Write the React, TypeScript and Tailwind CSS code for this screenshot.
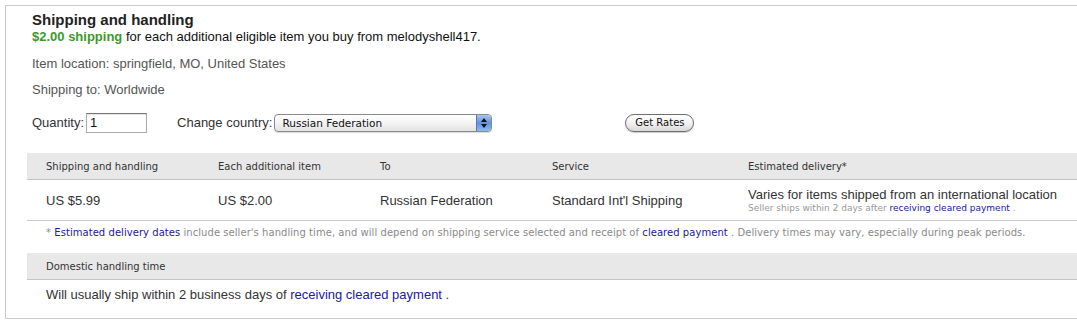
import React from 'react';

const sans = "font-['Liberation_Sans',Arial,sans-serif]";
const verdana = "font-['DejaVu_Sans',Verdana,sans-serif]";
const link = 'text-[#20209c]';

function CountrySelect() {
  return (
    <div className="flex h-[18px] w-[218px] items-stretch rounded-[4px] border border-[#8a8a8a] bg-gradient-to-b from-white via-[#f4f4f4] to-[#e2e2e2] shadow-[0_1px_1px_rgba(0,0,0,0.15)]">
      <span className={`flex-1 pl-[7px] text-[10.5px] leading-[16px] text-[#111] ${verdana}`}>
        Russian Federation
      </span>
      <span className="flex w-[15px] flex-col items-center justify-center gap-[2px] rounded-r-[3px] border-l border-[#5578b0] bg-gradient-to-b from-[#a9c8f0] via-[#5d93dc] to-[#8fb9ee]">
        <svg width="6" height="4" viewBox="0 0 6 4">
          <path d="M3 0 L6 4 L0 4 Z" fill="#111" />
        </svg>
        <svg width="6" height="4" viewBox="0 0 6 4">
          <path d="M0 0 L6 0 L3 4 Z" fill="#111" />
        </svg>
      </span>
    </div>
  );
}

export default function App() {
  const cols = 'grid grid-cols-[172px_162px_172px_196px_1fr]';
  return (
    <div className="h-[323px] w-[1077px] overflow-hidden bg-white">
      <div className="ml-[5px] mt-[5px] w-[1100px] border-b border-l border-t border-[#cccccc] pt-[4px]">
        <div className={`pl-[26px] ${sans}`}>
          <h2 className="text-[15px] font-bold leading-[19px] text-[#222]">
            Shipping and handling
          </h2>
          <p className="text-[13px] leading-[16px] text-[#111]">
            <span className="font-bold text-[#3b9a2c]">$2.00 shipping</span> for each additional
            eligible item you buy from melodyshell417.
          </p>
          <p className="mt-[11px] text-[13px] leading-[16px] text-[#555]">
            Item location: springfield, MO, United States
          </p>
          <p className="mt-[10px] text-[13px] leading-[16px] text-[#555]">
            Shipping to: Worldwide
          </p>
          <div className="mt-[15px] flex h-[20px] items-center text-[13px] text-[#333]">
            <span>Quantity:</span>
            <div className="ml-[2px] flex h-[20px] w-[61px] items-center border border-[#aaa] border-t-[#777] pl-[3px] text-[13px] text-[#111] shadow-[inset_0_1px_1px_rgba(0,0,0,0.12)]">
              1
            </div>
            <span className="ml-[30px]">Change country:</span>
            <div className="ml-[2px]">
              <CountrySelect />
            </div>
            <button
              className={`ml-[133px] h-[18px] w-[69px] rounded-full border border-[#6e6e6e] bg-gradient-to-b from-white via-[#f2f2f2] to-[#d8d8d8] text-[10px] leading-[16px] text-[#111] shadow-[0_1px_1px_rgba(0,0,0,0.2)] ${verdana}`}
            >
              Get Rates
            </button>
          </div>
        </div>

        <div className="ml-[21px] mt-[20px]">
          <div
            className={`${cols} h-[27px] items-center border-b border-[#c4c4c4] bg-[#e8e8e8] text-[10px] text-[#333] ${verdana}`}
          >
            <div className="pl-[19px]">Shipping and handling</div>
            <div className="pl-[19px]">Each additional item</div>
            <div className="pl-[19px]">To</div>
            <div className="pl-[19px]">Service</div>
            <div className="pl-[19px]">Estimated delivery*</div>
          </div>
          <div
            className={`${cols} h-[41px] items-center border-b border-[#cccccc] text-[13px] text-[#333] ${sans}`}
          >
            <div className="pl-[19px] pt-[2px]">US $5.99</div>
            <div className="pl-[19px] pt-[2px]">US $2.00</div>
            <div className="pl-[19px] pt-[2px]">Russian Federation</div>
            <div className="pl-[19px] pt-[2px]">Standard Int'l Shipping</div>
            <div className="pl-[19px]">
              <div className="leading-[15px]">Varies for items shipped from an international location</div>
              <div className={`text-[9px] leading-[12px] text-[#999] ${verdana}`}>
                Seller ships within 2 days after{' '}
                <span className={link}>receiving cleared payment</span> .
              </div>
            </div>
          </div>
          <p className={`h-[32px] pl-[19px] pt-[4px] text-[10px] leading-[15px] tracking-[0.05px] text-[#8a8a8a] ${verdana}`}>
            * <span className={link}>Estimated delivery dates</span> include seller's handling time,
            and will depend on shipping service selected and receipt of{' '}
            <span className={link}>cleared payment</span> . Delivery times may vary, especially
            during peak periods.
          </p>
          <div
            className={`flex h-[27px] items-center border-b border-[#c4c4c4] bg-[#e8e8e8] pl-[19px] text-[10px] text-[#333] ${verdana}`}
          >
            Domestic handling time
          </div>
          <p className={`h-[38px] pl-[19px] pt-[7px] text-[13px] leading-[16px] text-[#333] ${sans}`}>
            Will usually ship within 2 business days of{' '}
            <span className={link}>receiving cleared payment</span> .
          </p>
        </div>
      </div>
    </div>
  );
}
